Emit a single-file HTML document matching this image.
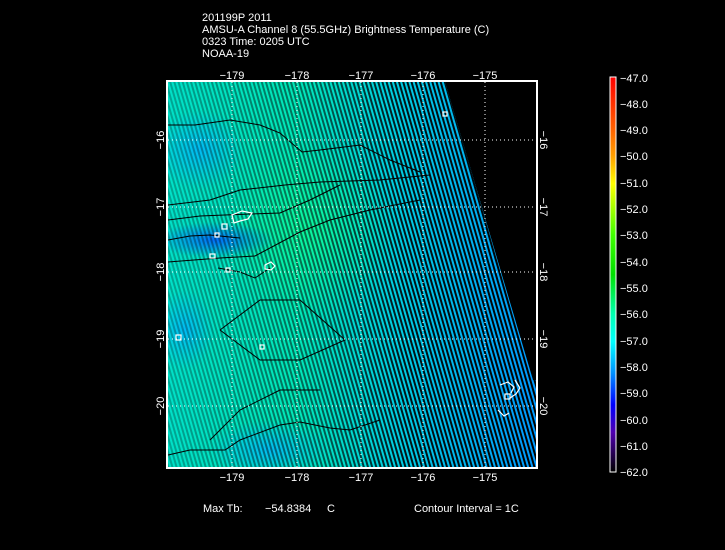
<!DOCTYPE html>
<html><head><meta charset="utf-8"><style>
html,body{margin:0;padding:0;background:#000;width:725px;height:550px;overflow:hidden}
svg{display:block}
text{font-family:"Liberation Sans",sans-serif;fill:#fff;font-size:11px}
</style></head><body>
<svg width="725" height="550" viewBox="0 0 725 550" xmlns="http://www.w3.org/2000/svg">
<defs>
<linearGradient id="base" x1="0" y1="0" x2="1" y2="0">
<stop offset="0" stop-color="#00e0c8"/>
<stop offset="0.35" stop-color="#00e8b8"/>
<stop offset="0.6" stop-color="#00d0e0"/>
<stop offset="1" stop-color="#0098ff"/>
</linearGradient>
<radialGradient id="blue1" cx="0.5" cy="0.5" r="0.5">
<stop offset="0" stop-color="#0060ff" stop-opacity="0.9"/>
<stop offset="1" stop-color="#0060ff" stop-opacity="0"/>
</radialGradient>
<radialGradient id="green1" cx="0.5" cy="0.5" r="0.5">
<stop offset="0" stop-color="#10ff90" stop-opacity="0.7"/>
<stop offset="1" stop-color="#10ff90" stop-opacity="0"/>
</radialGradient>
<radialGradient id="cyan1" cx="0.5" cy="0.5" r="0.5">
<stop offset="0" stop-color="#00b0ff" stop-opacity="0.8"/>
<stop offset="1" stop-color="#00b0ff" stop-opacity="0"/>
</radialGradient>
<pattern id="stripes" width="4" height="4" patternUnits="userSpaceOnUse" patternTransform="rotate(-16)">
<rect x="0" y="0" width="2" height="4" fill="#000"/>
</pattern>
<linearGradient id="fade" x1="0" y1="0" x2="1" y2="0">
<stop offset="0" stop-color="#fff" stop-opacity="0.25"/>
<stop offset="0.4" stop-color="#fff" stop-opacity="0.55"/>
<stop offset="0.65" stop-color="#fff" stop-opacity="0.9"/>
<stop offset="1" stop-color="#fff" stop-opacity="1"/>
</linearGradient>
<mask id="m"><rect x="166" y="80" width="372" height="390" fill="url(#fade)"/></mask>
<clipPath id="sw"><polygon points="168,82 445,82 533,380 536,380 536,467 168,467"/></clipPath>
<linearGradient id="cb" x1="0" y1="0" x2="0" y2="1">
<stop offset="0" stop-color="#ff0000"/>
<stop offset="0.13" stop-color="#ff6000"/>
<stop offset="0.2" stop-color="#ffa000"/>
<stop offset="0.27" stop-color="#ffff00"/>
<stop offset="0.4" stop-color="#40ff00"/>
<stop offset="0.5" stop-color="#00e000"/>
<stop offset="0.6" stop-color="#00ffb0"/>
<stop offset="0.67" stop-color="#00ffff"/>
<stop offset="0.75" stop-color="#0090ff"/>
<stop offset="0.83" stop-color="#0000ff"/>
<stop offset="0.9" stop-color="#5000b0"/>
<stop offset="1" stop-color="#000000"/>
</linearGradient>
</defs>

<text x="202" y="21">201199P 2011</text>
<text x="202" y="33">AMSU-A Channel 8 (55.5GHz) Brightness Temperature (C)</text>
<text x="202" y="45">0323 Time: 0205 UTC</text>
<text x="202" y="57">NOAA-19</text>

<g clip-path="url(#sw)">
<rect x="166" y="80" width="372" height="390" fill="url(#base)"/>
<ellipse cx="310" cy="230" rx="90" ry="90" fill="url(#green1)"/>
<ellipse cx="215" cy="240" rx="60" ry="18" fill="url(#blue1)"/>
<ellipse cx="200" cy="150" rx="45" ry="40" fill="url(#cyan1)"/>
<ellipse cx="270" cy="450" rx="60" ry="30" fill="url(#cyan1)"/>
<ellipse cx="185" cy="330" rx="30" ry="40" fill="url(#cyan1)"/>
<rect x="166" y="80" width="372" height="390" fill="url(#stripes)" mask="url(#m)"/>
<g fill="none" stroke="#000" stroke-width="1">
<polyline points="168,125 195,125 230,120 260,125 280,133 302,152 320,150 360,145 390,160 420,172"/>
<polyline points="168,205 210,200 240,190 285,185 320,182 380,180 430,175"/>
<polyline points="168,220 200,216 250,214 280,213 310,200 340,185"/>
<polyline points="168,240 190,236 210,235 240,238"/>
<polyline points="168,262 220,258 255,256 300,232 330,220 370,210 420,200"/>
<polyline points="218,268 240,272 255,278 270,268"/>
<polyline points="168,455 190,450 225,450 240,440 280,425 300,422 330,428 350,430 380,420"/>
<polyline points="220,330 260,300 300,300 345,340 300,360 260,360 220,330"/>
<polyline points="210,440 240,410 280,390 320,390"/>
</g>
<g fill="none" stroke="#fff" stroke-width="1.2">
<rect x="215" y="233" width="4" height="4"/><rect x="222" y="224" width="5" height="5"/>
<rect x="210" y="254" width="5" height="4"/><rect x="226" y="268" width="4" height="4"/>
<rect x="260" y="345" width="4" height="4"/><rect x="176" y="335" width="5" height="5"/>
<rect x="443" y="112" width="4" height="4"/><rect x="505" y="394" width="5" height="5"/>
<path d="M232 215 l10 -4 10 2 -4 6 -8 2 -6 2z"/>
<path d="M265 265 l6 -3 4 4 -4 4 -6 -1z"/>
<path d="M500 385 l8 -3 6 5 -3 6 M515 380 l5 8 -4 6 -6 4 M498 410 l6 6 5 -3"/>
</g>
</g>

<g stroke="#fff" stroke-width="1" stroke-dasharray="1,3" fill="none">
<line x1="232" y1="82" x2="232" y2="467"/><line x1="297" y1="82" x2="297" y2="467"/>
<line x1="361" y1="82" x2="361" y2="467"/><line x1="423" y1="82" x2="423" y2="467"/>
<line x1="485" y1="82" x2="485" y2="467"/>
<line x1="168" y1="140" x2="536" y2="140"/><line x1="168" y1="207" x2="536" y2="207"/>
<line x1="168" y1="272" x2="536" y2="272"/><line x1="168" y1="339" x2="536" y2="339"/>
<line x1="168" y1="406" x2="536" y2="406"/>
</g>
<rect x="167" y="81" width="370" height="387" fill="none" stroke="#fff" stroke-width="2"/>

<g text-anchor="middle">
<text x="232" y="79">−179</text><text x="297" y="79">−178</text><text x="361" y="79">−177</text><text x="423" y="79">−176</text><text x="485" y="79">−175</text>
<text x="232" y="481">−179</text><text x="297" y="481">−178</text><text x="361" y="481">−177</text><text x="423" y="481">−176</text><text x="485" y="481">−175</text>
<text transform="translate(164,140) rotate(-90)">−16</text>
<text transform="translate(164,207) rotate(-90)">−17</text>
<text transform="translate(164,272) rotate(-90)">−18</text>
<text transform="translate(164,339) rotate(-90)">−19</text>
<text transform="translate(164,406) rotate(-90)">−20</text>
<text transform="translate(540,140) rotate(90)">−16</text>
<text transform="translate(540,207) rotate(90)">−17</text>
<text transform="translate(540,272) rotate(90)">−18</text>
<text transform="translate(540,339) rotate(90)">−19</text>
<text transform="translate(540,406) rotate(90)">−20</text>
</g>

<rect x="610" y="77" width="6" height="395" fill="url(#cb)" stroke="#fff" stroke-width="1"/>
<g>
<text x="620" y="82">−47.0</text><text x="620" y="108">−48.0</text><text x="620" y="134">−49.0</text>
<text x="620" y="160">−50.0</text><text x="620" y="187">−51.0</text><text x="620" y="213">−52.0</text>
<text x="620" y="239">−53.0</text><text x="620" y="266">−54.0</text><text x="620" y="292">−55.0</text>
<text x="620" y="318">−56.0</text><text x="620" y="345">−57.0</text><text x="620" y="371">−58.0</text>
<text x="620" y="397">−59.0</text><text x="620" y="424">−60.0</text><text x="620" y="450">−61.0</text>
<text x="620" y="476">−62.0</text>
</g>

<text x="203" y="512">Max Tb:</text>
<text x="265" y="512">−54.8384</text>
<text x="327" y="512">C</text>
<text x="414" y="512">Contour Interval = 1C</text>
</svg>
</body></html>
